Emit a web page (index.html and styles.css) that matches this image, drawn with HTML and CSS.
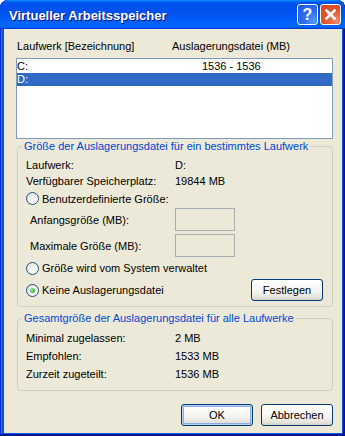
FILE: index.html
```html
<!DOCTYPE html>
<html lang="de">
<head>
    <meta charset="UTF-8">
    <title>Virtueller Arbeitsspeicher</title>
    <link rel="stylesheet" href="styles.css">
</head>
<body>
    <div class="window">
        <div class="titlebar">
            <span class="title">Virtueller Arbeitsspeicher</span>
            <div class="tb-buttons">
                <span class="tb-btn help">?</span>
                <span class="tb-btn close">
                    <svg width="13" height="13" viewBox="0 0 13 13">
                        <path d="M2.5 2.5 L10.5 10.5 M10.5 2.5 L2.5 10.5" stroke="#fff" stroke-width="2.6" stroke-linecap="square"/>
                    </svg>
                </span>
            </div>
        </div>

        <div class="client">
            <div class="list-head">
                <span>Laufwerk [Bezeichnung]</span>
                <span>Auslagerungsdatei (MB)</span>
            </div>
            <div class="listbox">
                <div class="list-row"><span>C:</span><span>1536 - 1536</span></div>
                <div class="list-row selected"><span>D:</span><span></span></div>
            </div>

            <fieldset class="group">
                <legend>Größe der Auslagerungsdatei für ein bestimmtes Laufwerk</legend>
                <div class="info"><span>Laufwerk:</span><span>D:</span></div>
                <div class="info"><span>Verfügbarer Speicherplatz:</span><span>19844 MB</span></div>
                <label class="option first"><input type="radio" name="mode" class="radio"> Benutzerdefinierte Größe:</label>
                <div class="size-row"><span>Anfangsgröße (MB):</span><input type="text" class="field" disabled></div>
                <div class="size-row second"><span>Maximale Größe (MB):</span><input type="text" class="field" disabled></div>
                <label class="option"><input type="radio" name="mode" class="radio"> Größe wird vom System verwaltet</label>
                <div class="option-line">
                    <label class="option"><input type="radio" name="mode" class="radio" checked> Keine Auslagerungsdatei</label>
                    <button class="btn">Festlegen</button>
                </div>
            </fieldset>

            <fieldset class="group total">
                <legend>Gesamtgröße der Auslagerungsdatei für alle Laufwerke</legend>
                <div class="info wide"><span>Minimal zugelassen:</span><span>2 MB</span></div>
                <div class="info wide"><span>Empfohlen:</span><span>1533 MB</span></div>
                <div class="info wide"><span>Zurzeit zugeteilt:</span><span>1536 MB</span></div>
            </fieldset>

            <div class="actions">
                <button class="btn default">OK</button>
                <button class="btn">Abbrechen</button>
            </div>
        </div>
    </div>
</body>
</html>
```

FILE: styles.css
```css
body {
    margin: 0;
    font-family: "Liberation Sans", Arial, sans-serif;
    font-size: 11px;
    color: #000;
}
.window {
    width: 345px;
    height: 436px;
    box-sizing: border-box;
    display: flex;
    flex-direction: column;
    background: #0855dd;
    border-radius: 8px 8px 0 0;
    box-shadow: inset -1px -1px #00138c, inset 1px 1px #0831d9, inset -2px -2px #001ea0, inset 2px 2px #166aee;
    overflow: hidden;
}
.titlebar {
    height: 29px;
    flex: none;
    display: flex;
    align-items: center;
    justify-content: space-between;
    padding: 0 4px 0 9px;
    background: linear-gradient(180deg, #0997ff, #0053ee 8%, #0050ee 40%, #0066ff 88%, #0066ff 93%, #005bff 95%, #003dd7 96%, #003dd7);
    border-radius: 8px 8px 0 0;
}
.title {
    color: #fff;
    font-weight: bold;
    font-size: 13px;
    text-shadow: 1px 1px #0f1089;
    margin-top: 1px;
}
.tb-buttons {
    display: flex;
    gap: 2px;
}
.tb-btn {
    width: 21px;
    height: 21px;
    box-sizing: border-box;
    border: 1px solid #fff;
    border-radius: 3px;
    display: flex;
    align-items: center;
    justify-content: center;
    color: #fff;
    font-weight: bold;
    font-size: 16px;
}
.help {
    background: radial-gradient(circle at 85% 85%, #5a9bff 0, #2f6ff0 40%, #1f5ae0 100%);
}
.close {
    background: radial-gradient(circle at 85% 85%, #f08c6c 0, #e4582f 45%, #d6431c 100%);
}
.client {
    flex: 1;
    margin: 0 3px 3px 4px;
    background: #ece9d8;
    padding: 11px 9px 0 12px;
}
.list-head {
    display: grid;
    grid-template-columns: 155px auto;
    padding-left: 1px;
    line-height: 13px;
    margin-bottom: 5px;
}
.listbox {
    height: 81px;
    box-sizing: border-box;
    border: 1px solid #7f9db9;
    background: #fff;
    padding-top: 1px;
}
.list-row {
    display: grid;
    grid-template-columns: 185px auto;
    line-height: 13px;
}
.list-row.selected {
    background: #316ac5;
    color: #fff;
}
.group {
    margin: 1px 0 0 1px;
    border: 1px solid #d0d0bf;
    border-radius: 4px;
    padding: 4px 9px 5px 8px;
    min-width: 0;
}
.group legend {
    color: #0046d5;
    padding: 0 2px;
    margin-left: -4px;
    line-height: 13px;
}
.group.total {
    margin-top: 5px;
    padding-bottom: 7px;
}
.info {
    display: grid;
    grid-template-columns: 149px auto;
    height: 16px;
    line-height: 16px;
}
.info.wide {
    height: 18px;
    line-height: 18px;
}
.option {
    display: flex;
    align-items: center;
    gap: 3px;
    height: 22px;
}
.option.first {
    height: 19px;
}
.radio {
    appearance: none;
    width: 13px;
    height: 13px;
    margin: 0;
    box-sizing: border-box;
    border: 1px solid #1c5180;
    border-radius: 50%;
    background: linear-gradient(135deg, #dcdcd7, #f8f8f6 60%, #fff);
    display: flex;
    align-items: center;
    justify-content: center;
}
.radio:checked::after {
    content: "";
    width: 5px;
    height: 5px;
    border-radius: 50%;
    background: radial-gradient(circle at 35% 35%, #a0e89a, #21a121);
}
.size-row {
    display: grid;
    grid-template-columns: 145px 60px;
    align-items: center;
    padding-left: 4px;
    height: 23px;
}
.size-row.second {
    margin-top: 3px;
}
.field {
    width: 60px;
    height: 23px;
    box-sizing: border-box;
    border: 1px solid #a5acb2;
    background: #ece9d8;
    margin: 0;
}
.option-line {
    display: flex;
    justify-content: space-between;
    align-items: center;
    height: 22px;
}
.btn {
    width: 72px;
    height: 22px;
    padding: 0;
    font-family: inherit;
    font-size: 11px;
    color: #000;
    border: 1px solid #003c74;
    border-radius: 3px;
    background: linear-gradient(180deg, #fff, #f3f3ef 60%, #e3e2da 88%, #d6d0c5);
}
.btn.default {
    box-shadow: inset 0 0 0 1px #b9d1fa, inset 0 0 0 2px #89ade4;
}
.actions {
    display: flex;
    justify-content: flex-end;
    gap: 8px;
    margin-top: 13px;
}
```
